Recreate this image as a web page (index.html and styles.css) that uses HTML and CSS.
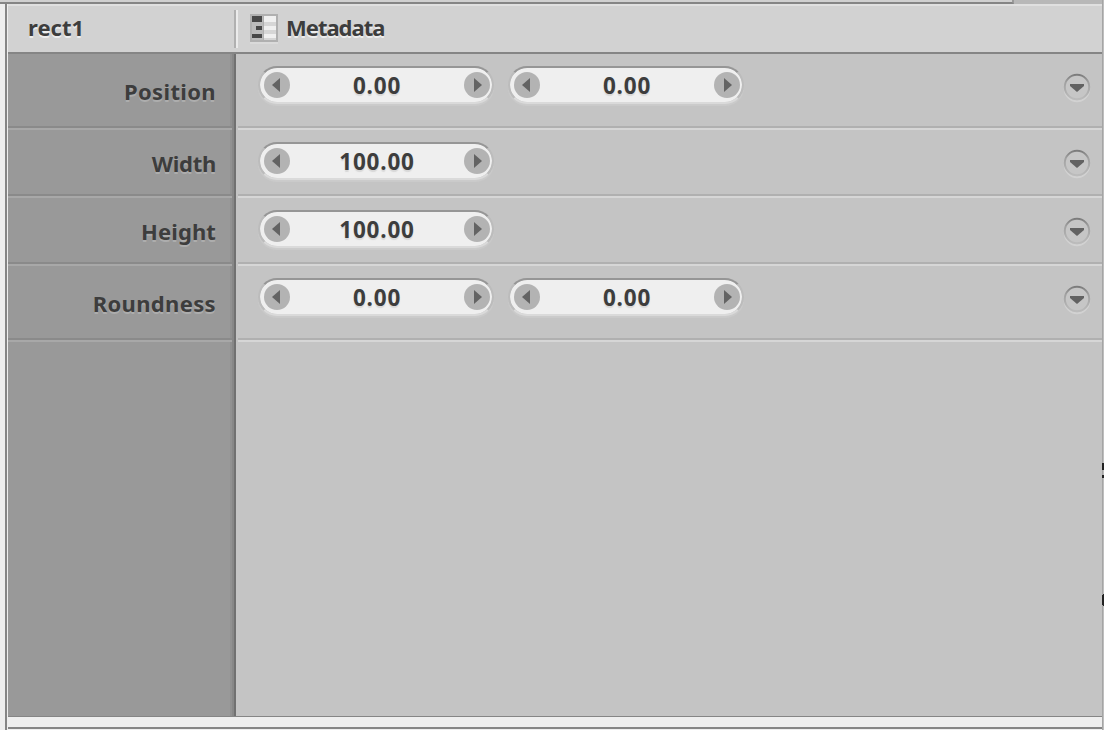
FILE: index.html
```html
<!DOCTYPE html>
<html lang="en">
<head>
<meta charset="utf-8">
<title>rect1</title>
<link rel="stylesheet" href="styles.css">
</head>
<body>
<svg class="defs" width="0" height="0" aria-hidden="true">
  <symbol id="left" viewBox="0 0 26 26"><circle cx="13" cy="13" r="13" fill="#b3b3b3"/><path d="M8 13L16 6V20Z" fill="#636363"/></symbol>
  <symbol id="right" viewBox="0 0 26 26"><circle cx="13" cy="13" r="13" fill="#b3b3b3"/><path d="M18 13L10 6V20Z" fill="#636363"/></symbol>
  <linearGradient id="ring" x1="0" y1="0" x2="0" y2="1"><stop offset="0" stop-color="#7c7c7c"/><stop offset=".3" stop-color="#a0a0a0"/><stop offset="1" stop-color="#bcbcbc"/></linearGradient>
  <symbol id="menu" viewBox="0 0 28 30"><circle cx="14" cy="16" r="12.2" fill="none" stroke="#d2d2d2" stroke-width="2"/><circle cx="14" cy="14" r="12.2" fill="#c6c6c6" stroke="url(#ring)" stroke-width="2"/><path d="M7 11H21V13L14 19L7 13Z" fill="#626262"/></symbol>
</svg>
<div class="window">
  <div class="topbar"><div class="tab"></div></div>
  <main class="panel">
    <header class="header">
      <div class="node">rect1</div>
      <div class="meta">
        <svg class="metaicon" width="28" height="30" viewBox="0 0 28 30">
          <path d="M0 28H28V30H0Z" fill="#dadada"/><path d="M0 0H28V28H0Z" fill="#b0b0b0"/><path d="M2 2H13V26H2Z" fill="#bcbcbc"/><path d="M14 2H26V26H14Z" fill="#d6d6d6"/>
          <path d="M2 2H12V8H2ZM6 12H12V16H6ZM2 20H12V24H2Z" fill="#484848"/>
          <path d="M14 2H26V8H14ZM14 12H26V16H14ZM14 20H26V24H14Z" fill="#f0f0f0"/>
        </svg>
        <span class="metalabel">Metadata</span>
      </div>
    </header>
    <section class="params">
      <div class="row tall"><div class="label position">Position</div><div class="controls">
        <div class="field"><svg class="arrow"><use href="#left"/></svg><span>0.00</span><svg class="arrow"><use href="#right"/></svg></div>
        <div class="field"><svg class="arrow"><use href="#left"/></svg><span>0.00</span><svg class="arrow"><use href="#right"/></svg></div>
        <svg class="menu"><use href="#menu"/></svg></div></div>
      <div class="row"><div class="label width">Width</div><div class="controls">
        <div class="field"><svg class="arrow"><use href="#left"/></svg><span>100.00</span><svg class="arrow"><use href="#right"/></svg></div>
        <svg class="menu"><use href="#menu"/></svg></div></div>
      <div class="row"><div class="label height">Height</div><div class="controls">
        <div class="field"><svg class="arrow"><use href="#left"/></svg><span>100.00</span><svg class="arrow"><use href="#right"/></svg></div>
        <svg class="menu"><use href="#menu"/></svg></div></div>
      <div class="row tall"><div class="label roundness">Roundness</div><div class="controls">
        <div class="field"><svg class="arrow"><use href="#left"/></svg><span>0.00</span><svg class="arrow"><use href="#right"/></svg></div>
        <div class="field"><svg class="arrow"><use href="#left"/></svg><span>0.00</span><svg class="arrow"><use href="#right"/></svg></div>
        <svg class="menu"><use href="#menu"/></svg></div></div>
      <div class="rest"><div class="side"></div></div>
    </section>
  </main>
  <footer class="bottom"></footer>
  <svg class="edge" width="2" height="730"><path d="M0 0H1V730H0Z" fill="#a5a5a5"/><path d="M1 0H2V730H1Z" fill="#bebebe"/><path d="M0 463H2V470H0ZM0 475H2V478H0ZM0 595H1V605H0ZM1 594H2V606H1Z" fill="#222"/></svg>
</div>
</body>
</html>
```
FILE: styles.css
```css
* { box-sizing: border-box; }
body { margin: 0; overflow: hidden; background: #eee; font: 700 22px/30px "Noto Sans", "Open Sans", sans-serif; color: #3d3d3d; }
svg { display: block; flex: none; }
.defs { position: absolute; }
.window { width: 1104px; height: 730px; display: grid; grid-template: 4px 713px 13px / 8px 1094px 2px; position: relative; }
.topbar { grid-area: 1 / 1 / 2 / 4; background: #b8b8b8; }
.tab { width: 1014px; height: 4px; background: #d0d0d0; border-bottom: 2px solid #858585; border-right: 2px solid #999; }
.window::before { content: ""; grid-area: 2 / 1 / 4 / 2; width: 2px; margin-left: 5px; background: #858585; }
.panel { grid-area: 2 / 2; display: flex; flex-direction: column; border-bottom: 1px solid #858585; }
.header { height: 50px; flex: none; display: flex; background: #d2d2d2; border-top: 2px solid #e0e0e0; border-bottom: 2px solid #858585; text-shadow: 0 2px 0 #ededed; }
.node { width: 226px; padding: 6px 0 0 20px; letter-spacing: 0; }
.meta { height: 38px; margin-top: 4px; border-left: 2px solid #b0b0b0; box-shadow: inset 2px 0 #ebebeb; padding: 4px 0 0 14px; display: flex; }
.metalabel { margin: -2px 0 0 8px; letter-spacing: -1px; }
.params { flex: 1; display: flex; flex-direction: column; background: #c4c4c4; }
.row { display: flex; height: 68px; }
.row.tall { height: 76px; }
.label, .side { width: 228px; background: #999; box-shadow: inset -2px 0 #707070, inset -4px 0 #878787, inset -6px 0 #919191; }
.label { padding: 18px 20px 0 0; text-align: right; letter-spacing: .35px; text-shadow: 0 2px 0 #adadad; position: relative; }
.tall .label { padding-top: 22px; }
.label.width { letter-spacing: -.25px; }
.label.height { letter-spacing: .1px; }
.label::after { content: ""; position: absolute; left: 0; right: 4px; bottom: 0; height: 4px; background: linear-gradient(#8a8a8a 50%, #a8a8a8 50%); }
.controls { flex: 1; margin-left: 2px; padding: 12px 11px 0 20px; display: flex; gap: 14px; background: linear-gradient(#b0b0b0 50%, #d6d6d6 50%) bottom / 100% 4px no-repeat; }
.field { width: 236px; height: 38px; border-radius: 19px; display: flex; align-items: flex-start; justify-content: space-between; padding: 4px 2px 4px 4px; border: 2px solid; border-color: #969696 #bcbcbc #dadada; background: #efefef; background-clip: padding-box; box-shadow: 0 2px 1px #cbcbcb; }
.field span { margin-top: -1px; text-shadow: 0 2px 1px #d8d8d8; font-size: 22.5px; letter-spacing: .8px; }
.arrow { width: 26px; height: 26px; }
.menu { width: 28px; height: 30px; margin: 7px 0 0 auto; }
.rest { flex: 1; display: flex; }
.bottom { grid-area: 3 / 2; height: 12px; border-bottom: 2px solid #858585; }
.edge { grid-area: 1 / 3 / 4 / 4; }
```
